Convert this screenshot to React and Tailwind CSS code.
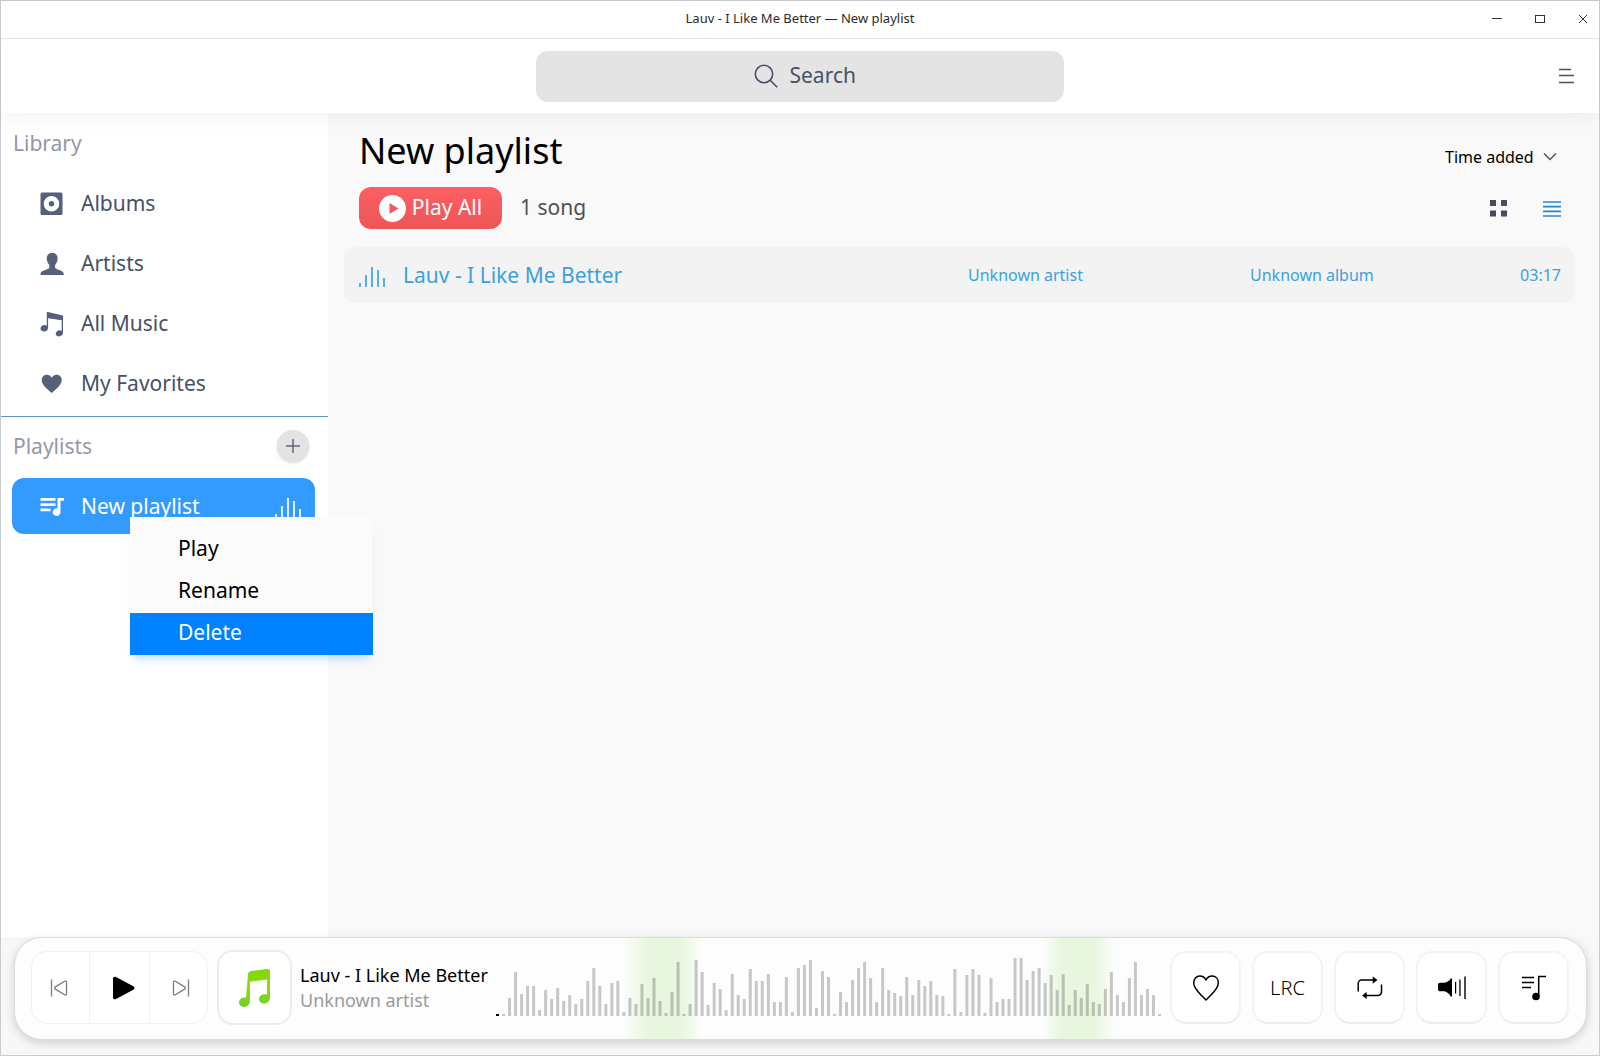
import React from "react";

const LEVELS = [
  2, 2, 18, 44, 22, 30, 30, 6, 26, 17, 28, 15, 21, 12, 17, 35, 48, 30, 12, 33, 35, 4, 18, 12, 32,
  18, 38, 15, 3, 24, 54, 2, 12, 56, 44, 11, 33, 27, 6, 42, 21, 17, 47, 35, 35, 42, 14, 14, 39, 4,
  48, 51, 56, 8, 45, 39, 2, 24, 14, 36, 48, 54, 38, 14, 48, 26, 23, 20, 39, 21, 36, 30, 35, 21, 20,
  2, 47, 4, 41, 47, 41, 3, 38, 14, 17, 17, 58, 58, 36, 45, 48, 33, 41, 26, 42, 11, 26, 18, 32, 14,
  12, 27, 44, 21, 14, 38, 54, 21, 27, 21, 2,
];

function AlbumIcon() {
  return (
    <svg width="24" height="24" viewBox="0 0 24 24" fill="currentColor" aria-hidden="true">
      <path
        fillRule="evenodd"
        d="M2 0.5h19a1.5 1.5 0 0 1 1.5 1.5v19.500a1.500 1.500 0 0 1-1.500 1.500H2A1.500 1.500 0 0 1 .5 21.500V2A1.500 1.500 0 0 1 2 .5zM11.500 4a7.800 7.800 0 1 0 0 15.600 7.800 7.800 0 0 0 0-15.600z"
      />
      <circle cx="11.500" cy="11.800" r="2.700" />
    </svg>
  );
}

function ArtistIcon() {
  return (
    <svg width="24" height="24" viewBox="0 0 24 24" fill="currentColor" aria-hidden="true">
      <path d="M12.200.8c3.600 0 5.600 2.500 5.400 5.800-.1 2.600-.9 4.600-2.100 6-.7.900-.8 3.300.3 4 2.200 1.500 7.700 1.700 8 5.600v.8H.5v-.8c.3-3.900 5.900-4.100 8.100-5.600 1.100-.7 1-3.100.3-4-1.200-1.400-2-3.400-2.100-6C6.600 3.300 8.600.8 12.200.8z" />
    </svg>
  );
}

function MusicIcon() {
  return (
    <svg width="24" height="26" viewBox="0 0 24 26" fill="currentColor" aria-hidden="true">
      <path d="M6.800.8 23 4.600v17.200c0 2-1.700 3.600-3.900 3.600-1.900 0-3.400-1-3.400-2.600 0-2 1.900-3.600 4-3.600.8 0 1.500.2 2 .5V9.300L8.100 7.200v9.600c0 2.100-1.700 3.700-3.900 3.700-2.100 0-3.700-1.100-3.700-2.800 0-2 1.900-3.600 4.100-3.600.9 0 1.600.2 2.200.6z" />
    </svg>
  );
}

function HeartIcon() {
  return (
    <svg width="24" height="24" viewBox="0 0 24 24" fill="currentColor" aria-hidden="true">
      <path d="M11.700 21C8 17.700 1.700 13.300 1.700 8 1.700 5 4 2.800 6.800 2.800c2 0 3.900 1.100 4.900 2.900 1-1.800 2.900-2.900 4.900-2.900 2.800 0 5.100 2.200 5.100 5.200 0 5.300-6.300 9.700-10 13z" />
    </svg>
  );
}

function QueueIcon() {
  return (
    <svg width="24" height="24" viewBox="0 0 24 24" fill="currentColor" aria-hidden="true">
      <path d="M.5 3h15v2.700H.5zM.5 8.300h15V11H.5zM.5 13.500h10v2.700H.5zM17.500 3H24v2.700h-3.500v11.500a3.900 3.900 0 1 1-3-3.800z" />
    </svg>
  );
}

function BarsIcon() {
  return (
    <svg width="28" height="22" viewBox="0 0 28 22" fill="currentColor" fillOpacity="0.85" aria-hidden="true">
      <rect x="0" y="16" width="2" height="4" />
      <rect x="6" y="8" width="2" height="12" />
      <rect x="12" y="0" width="2" height="20" />
      <rect x="18" y="3" width="2" height="17" />
      <rect x="24" y="11" width="2" height="9" />
    </svg>
  );
}

const LIBRARY = [
  { label: "Albums", icon: <AlbumIcon /> },
  { label: "Artists", icon: <ArtistIcon /> },
  { label: "All Music", icon: <MusicIcon /> },
  { label: "My Favorites", icon: <HeartIcon /> },
];

function TitleBar() {
  return (
    <div className="relative z-20 grid h-[38px] grid-cols-[1fr_auto_1fr] items-center border-b border-[#e3e5e7] bg-white pb-0.5">
      <span />
      <h1 className="text-[13px] text-[#2b2b2b]">Lauv - I Like Me Better — New playlist</h1>
      <div className="flex items-center justify-end gap-[23px] pr-1.5 text-[#333]">
        <button type="button" aria-label="Minimize" className="flex size-5 items-center justify-center">
          <svg width="12" height="12" viewBox="0 0 12 12" stroke="currentColor" aria-hidden="true">
            <path d="M1 5.500h10" />
          </svg>
        </button>
        <button type="button" aria-label="Maximize" className="flex size-5 items-center justify-center">
          <svg width="12" height="12" viewBox="0 0 12 12" fill="none" stroke="currentColor" aria-hidden="true">
            <rect x="1.500" y="2.500" width="9" height="7" />
          </svg>
        </button>
        <button type="button" aria-label="Close" className="flex size-5 items-center justify-center">
          <svg width="12" height="12" viewBox="0 0 12 12" stroke="currentColor" aria-hidden="true">
            <path d="M2 2l8 8M10 2l-8 8" />
          </svg>
        </button>
      </div>
    </div>
  );
}

function Header() {
  return (
    <header className="relative z-10 grid h-[74px] grid-cols-[1fr_auto_1fr] items-center bg-white shadow-[0_0_26px_rgba(0,0,0,0.07)]">
      <span />
      <label className="flex h-[51px] w-[528px] items-center justify-center gap-3 rounded-xl bg-[#e4e4e4] pl-2.5 text-[#465066]">
        <svg width="24" height="24" viewBox="0 0 24 24" fill="none" stroke="currentColor" strokeWidth="1.600" aria-hidden="true">
          <circle cx="10" cy="10" r="8.700" />
          <path d="M16.200 16.200l7 7" />
        </svg>
        <input
          type="text"
          aria-label="Search"
          placeholder="Search"
          className="w-[67px] bg-transparent text-[21px] outline-none placeholder:text-[#465066]"
        />
      </label>
      <button type="button" aria-label="Menu" className="mr-[24px] justify-self-end text-[#4b5162]">
        <svg width="17" height="16" viewBox="0 0 17 16" stroke="currentColor" strokeWidth="1.400" aria-hidden="true">
          <path d="M1 1.500h12M1 7.500h15M1 14.500h15" />
        </svg>
      </button>
    </header>
  );
}

function ContextMenu() {
  return (
    <div
      role="menu"
      className="absolute top-[39px] left-[118px] z-20 w-[243px] bg-[#fbfbfb] pt-3 text-[21px] text-black shadow-[0_8px_8px_-4px_rgba(0,110,220,0.22)]"
    >
      <button type="button" role="menuitem" className="block h-[42px] w-full pb-0.5 pl-12 text-left">
        Play
      </button>
      <button type="button" role="menuitem" className="block h-[42px] w-full pb-0.5 pl-12 text-left">
        Rename
      </button>
      <button type="button" role="menuitem" className="block h-[42px] w-full bg-[#0081ff] pb-0.5 pl-12 text-left text-white">
        Delete
      </button>
    </div>
  );
}

function Sidebar() {
  return (
    <aside className="w-[327px] shrink-0 bg-white pt-[15px]">
      <h2 className="pl-3 text-[21px] leading-[30px] text-[#9398a6]">Library</h2>
      <nav className="mt-[18px] mb-1 flex flex-col gap-1 px-[11px]" aria-label="Library">
        {LIBRARY.map((item) => (
          <button
            key={item.label}
            type="button"
            className="flex h-14 w-full items-center gap-[17px] rounded-xl pl-7 text-[21px] text-[#465066]"
          >
            <span className="flex w-6 justify-center text-[#55617a]">{item.icon}</span>
            {item.label}
          </button>
        ))}
      </nav>
      <div className="border-t border-[#5c96b8] pt-[13px]">
        <div className="flex items-center justify-between pr-[19px] pl-3">
          <h2 className="text-[21px] leading-8 text-[#9398a6]">Playlists</h2>
          <button
            type="button"
            aria-label="Add playlist"
            className="flex size-8 items-center justify-center rounded-full bg-[#e3e3e4] text-[#60687c] shadow-[0_1px_3px_rgba(0,0,0,0.15)]"
          >
            <svg width="14" height="14" viewBox="0 0 14 14" stroke="currentColor" strokeWidth="1.500" aria-hidden="true">
              <path d="M7 0v14M0 7h14" />
            </svg>
          </button>
        </div>
        <div className="relative mt-4 ml-[11px] w-[303px]">
          <button
            type="button"
            className="flex h-14 w-full items-center gap-[17px] rounded-xl bg-[#339bff] pt-0.5 pr-3 pl-7 text-[21px] text-white"
          >
            <QueueIcon />
            <span className="flex-1 text-left">New playlist</span>
            <span className="mt-1">
              <BarsIcon />
            </span>
          </button>
          <ContextMenu />
        </div>
      </div>
    </aside>
  );
}

function Main() {
  return (
    <main className="min-w-0 flex-1 bg-[#f9f9f9] pt-[14px] pr-6 pl-4">
      <div className="flex justify-between pr-3.5 pl-[15px]">
        <div>
          <h2 className="text-[36px] leading-[48px] text-black">New playlist</h2>
          <div className="mt-3 flex items-center gap-[18px]">
            <button
              type="button"
              className="flex h-[42px] w-[143px] items-center justify-center gap-1.5 rounded-xl bg-linear-to-b from-[#fb6063] to-[#ee5557] text-[21px] text-white"
            >
              <svg width="27" height="27" viewBox="0 0 27 27" aria-hidden="true">
                <circle cx="13.500" cy="13.500" r="13.500" fill="#fff" />
                <path d="M10.500 8v11l9-5.500z" fill="#f05a5d" />
              </svg>
              Play All
            </button>
            <span className="text-[21px] text-[#505050]">1 song</span>
          </div>
        </div>
        <div className="flex flex-col items-end justify-between pt-[18px] pb-[11px]">
          <label className="flex items-center text-[#4b5162]">
            <select aria-label="Sort by" className="w-[98px] appearance-none bg-transparent text-[16px] leading-6 text-black outline-none">
              <option>Time added</option>
            </select>
            <svg width="18" height="14" viewBox="0 0 18 14" fill="none" stroke="currentColor" strokeWidth="1.400" aria-hidden="true">
              <path d="M1 3.500l6 6 6-6" />
            </svg>
          </label>
          <div className="flex items-center gap-[35px]">
            <button type="button" aria-label="Grid view" className="text-[#474a62]">
              <svg width="18" height="18" viewBox="0 0 18 18" fill="currentColor" aria-hidden="true">
                <path d="M0 0h6v6H0zM11 0h6v6h-6zM0 10.500h6v6H0zM11 10.500h6v6h-6z" />
              </svg>
            </button>
            <button type="button" aria-label="List view" className="text-[#1f86d6]">
              <svg width="18" height="18" viewBox="0 0 18 18" stroke="currentColor" strokeWidth="1.700" aria-hidden="true">
                <path d="M0 2h18M0 6.700h18M0 11.300h18M0 16h18" />
              </svg>
            </button>
          </div>
        </div>
      </div>
      <table className="mt-[18px] w-full table-fixed text-[#3ba1dc]">
        <tbody>
          <tr className="h-14">
            <td className="rounded-l-xl bg-[#f3f3f3] pt-0.5 pl-[15px]">
              <div className="flex items-center gap-4">
                <span className="pt-1">
                  <BarsIcon />
                </span>
                <span className="text-[21px]">Lauv - I Like Me Better</span>
              </div>
            </td>
            <td className="w-[282px] bg-[#f3f3f3] text-[16px]">Unknown artist</td>
            <td className="w-[240px] bg-[#f3f3f3] text-[16px]">Unknown album</td>
            <td className="w-[85px] rounded-r-xl bg-[#f3f3f3] pr-3.5 text-right text-[16px]">03:17</td>
          </tr>
        </tbody>
      </table>
    </main>
  );
}

function PlayerButton({ label, children }) {
  return (
    <button
      type="button"
      aria-label={label}
      className="flex h-[73px] w-[71px] shrink-0 items-center justify-center rounded-2xl border-2 border-[#f3f3f3] border-b-[#ececec] bg-white text-black"
    >
      {children}
    </button>
  );
}

function Player() {
  return (
    <footer className="bg-[#f8f7f7] pr-3 pb-[15px] pl-[13px]">
      <div className="flex h-[103px] items-center rounded-[28px] border border-[#dcdcdc] bg-[#fdfdfd] pr-[17px] pl-4 shadow-[0_3px_10px_rgba(0,0,0,0.16)]">
        <div className="mb-0.5 flex h-[73px] w-[177px] shrink-0 rounded-2xl border border-[#f1f1f1] bg-white">
          <button type="button" aria-label="Previous" className="flex w-[57px] items-center justify-center pr-1 text-[#7a7a7a]">
            <svg width="18" height="18" viewBox="0 0 18 18" fill="none" stroke="currentColor" strokeWidth="1.300" aria-hidden="true">
              <path d="M1.500 0.500v17M16.500 3.300v11.400c0 1.200-1 1.700-1.900 1.100L5.300 10.100c-.8-.5-.8-1.700 0-2.200l9.300-5.700c.9-.6 1.900-.1 1.900 1.100z" />
            </svg>
          </button>
          <button type="button" aria-label="Play" className="flex flex-1 items-center justify-center border-x border-[#f1f1f1] pl-2 text-black">
            <svg width="22" height="24" viewBox="0 0 22 24" fill="currentColor" aria-hidden="true">
              <path d="M0 2.600C0 .9 1.600.2 3 1l17.300 9.300c1.600.9 1.600 2.500 0 3.400L3 23c-1.400.8-3 .1-3-1.600z" />
            </svg>
          </button>
          <button type="button" aria-label="Next" className="flex w-[57px] items-center justify-center pl-1 text-[#7a7a7a]">
            <svg width="18" height="18" viewBox="0 0 18 18" fill="none" stroke="currentColor" strokeWidth="1.300" aria-hidden="true">
              <path d="M16.500 0.500v17M1.500 3.300v11.400c0 1.200 1 1.700 1.900 1.100l9.300-5.700c.8-.5.8-1.700 0-2.200L3.400 2.200c-.9-.6-1.900-.1-1.900 1.100z" />
            </svg>
          </button>
        </div>
        <div className="mb-0.5 ml-[9px] flex size-[75px] shrink-0 items-center justify-center rounded-2xl border-2 border-[#ececec] bg-white">
          <svg width="32" height="40" viewBox="0 0 32 40" aria-hidden="true">
            <defs>
              <linearGradient id="note" x1="0" y1="0" x2="0" y2="1">
                <stop offset="0" stopColor="#7fd60f" />
                <stop offset="0.500" stopColor="#8fdc0c" />
                <stop offset="1" stopColor="#6fcf2a" />
              </linearGradient>
            </defs>
            <path
              fill="url(#note)"
              d="M9 6.500C9 4.500 10 3.400 12 3L28 1c2-.3 3 .6 3 2.400V29c0 4-2.300 6.500-6 6.500-3 0-5-1.700-5-4.300 0-3 2.500-5 5.700-5 .9 0 1.600.1 2.300.4V11.500l-17 2.300V32c0 4.200-2.300 6.900-6 6.900-3 0-5-1.700-5-4.400 0-3 2.400-5 5.600-5 .5 0 1 .1 1.400.2z"
            />
          </svg>
        </div>
        <div className="mb-0.5 ml-2 w-[196px] shrink-0 whitespace-nowrap text-[18px] leading-[25px]">
          <p className="text-black">Lauv - I Like Me Better</p>
          <p className="text-[#9a9a9a]">Unknown artist</p>
        </div>
        <div className="flex min-w-0 flex-1 items-center self-stretch bg-[linear-gradient(90deg,transparent_19%,#e8f5df_23%,#e8f5df_28%,transparent_31%,transparent_82%,#e8f5df_85%,#e8f5df_90%,transparent_93%)] pb-[5px]">
          <svg
            className="h-[60px] w-full"
            viewBox="0 0 663 60"
            preserveAspectRatio="none"
            role="img"
            aria-label="Waveform"
          >
            {LEVELS.map((h, i) => (
              <rect
                key={i}
                x={i * 6}
                y={60 - h}
                width="3"
                height={h}
                fill="#000"
                fillOpacity={i === 0 ? 1 : 0.21}
              />
            ))}
          </svg>
        </div>
        <div className="mb-0.5 ml-[9px] flex gap-[11px]">
          <PlayerButton label="Favorite">
            <svg width="28" height="28" viewBox="0 0 28 28" fill="none" stroke="currentColor" strokeWidth="1.500" strokeLinejoin="round" aria-hidden="true">
              <path d="M14 26C12.500 24.200 9 21.300 6.300 18 3.500 14.800 1.700 12 1.700 8.800 1.700 4.800 4.300 2 7.800 2 10.600 2 12.800 3.600 14 6c1.200-2.400 3.400-4 6.200-4 3.500 0 6.100 2.800 6.100 6.800 0 3.200-1.800 6-4.600 9.200C19 21.300 15.500 24.200 14 26z" />
            </svg>
          </PlayerButton>
          <PlayerButton label="Lyrics">
            <span className="text-[20px] font-light">LRC</span>
          </PlayerButton>
          <PlayerButton label="Repeat">
            <svg width="26" height="24" viewBox="0 0 26 24" fill="none" stroke="currentColor" strokeWidth="1.500" aria-hidden="true">
              <path d="M1.200 15.500V7.500a3.500 3.500 0 0 1 3.500-3.500H17M24.500 8.500v7.500a3.500 3.500 0 0 1-3.500 3.500H9" />
              <path d="M15.700.5 20.500 4l-4.800 3.700zM9.700 16 5 19.500 9.700 23z" fill="currentColor" stroke="none" />
            </svg>
          </PlayerButton>
          <PlayerButton label="Volume">
            <svg width="28" height="24" viewBox="0 0 28 24" fill="currentColor" aria-hidden="true">
              <path d="M2.500 6.700h3C8.500 6.700 11.500 5 12.700 2.500H14v18h-1.300C11.500 18 8.500 15.300 5.500 15.300h-3C.8 15.300 0 14.500 0 13V9c0-1.500.8-2.300 2.500-2.300zM17 6h1.200v11.500H17zM21.300 3.500h1.300V20h-1.300zM26.300.5h1.400v22.500h-1.400z" />
            </svg>
          </PlayerButton>
          <PlayerButton label="Play queue">
            <svg width="26" height="26" viewBox="0 0 26 26" fill="none" stroke="currentColor" strokeWidth="1.500" aria-hidden="true">
              <path d="M1 2.500h12M1 7.500h12M1 12.500h9M17.700 21.500V1.500h7.300" />
              <circle cx="15" cy="21.500" r="3.800" fill="currentColor" stroke="none" />
            </svg>
          </PlayerButton>
        </div>
      </div>
    </footer>
  );
}

export default function App() {
  return (
    <div className="flex min-h-screen flex-col border border-[#c8cbcf] bg-white font-['Noto_Sans',sans-serif]">
      <TitleBar />
      <Header />
      <div className="flex flex-1">
        <Sidebar />
        <Main />
      </div>
      <Player />
    </div>
  );
}
